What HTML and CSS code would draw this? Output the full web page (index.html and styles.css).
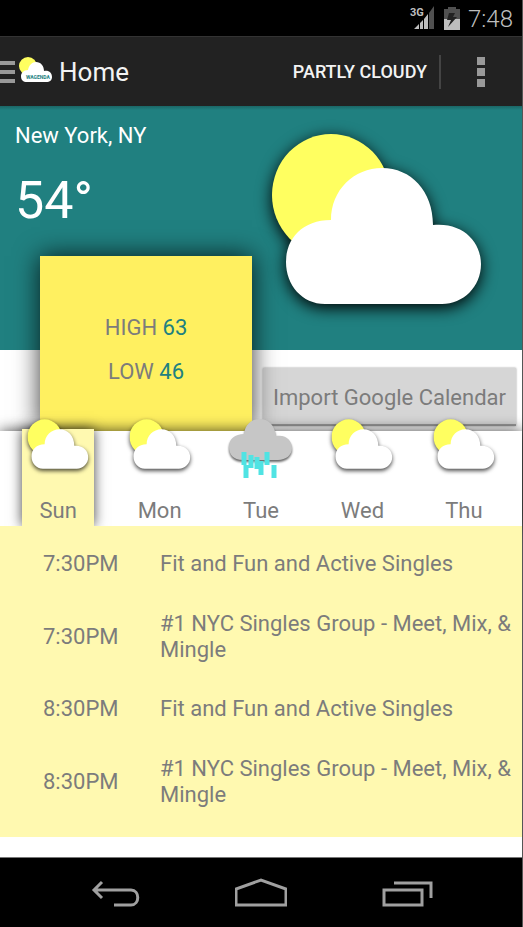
FILE: index.html
```html
<!DOCTYPE html>
<html lang="en">
<head>
<meta charset="utf-8">
<meta name="viewport" content="width=device-width, initial-scale=1">
<title>Wagenda</title>
<link rel="stylesheet" href="styles.css">
</head>
<body>
<svg class="defs" aria-hidden="true">
  <symbol id="sun-cloud" viewBox="0 0 210 172">
    <ellipse class="sun" cx="59" cy="62" rx="59" ry="61"/>
    <path class="cloud" d="M53 171C30 171 14 152 14 129C14 105 31 87 59 87C59 57 82 35 110 35C139 35 161 58 161 92C190 89 209 108 209 131C209 154 191 171 170 171Z"/>
  </symbol>
</svg>
<div class="screen">
  <header class="status">
    <svg class="signal" viewBox="0 0 26 24" aria-hidden="true">
      <text x="0" y="10">3G</text>
      <path class="lit" d="M4 23L9 18V23ZM10 17L13 14V23H10ZM14 13L18 8V23H14Z"/>
      <path class="dim" d="M19 7L24 0V23H19Z"/>
    </svg>
    <svg class="battery" viewBox="0 0 16 23" aria-hidden="true">
      <path class="dim" d="M4 0H12V2H16V12H0V2H4Z"/>
      <path class="lit" d="M0 12H16V23H0Z"/>
      <path class="bolt" d="M5 6H11L9 10H13L4 20L7 13H3Z"/>
    </svg>
    <span>7:48</span>
  </header>
  <nav class="bar">
    <button class="menu" aria-label="Open menu"><svg viewBox="0 0 15 22"><path d="M0 0H15V4H0ZM0 9H15V13H0ZM0 18H15V22H0Z"/></svg></button>
    <svg class="logo" viewBox="0 0 34 26" aria-hidden="true">
      <ellipse class="sun" cx="9" cy="9" rx="9" ry="9"/>
      <path class="cloud" d="M8 25C4 25 2 23 2 19C2 16 5 13 9 13C10 8 13 5 17 5C22 5 25 9 25 14C30 13 33 16 33 20C33 23 31 25 27 25Z"/>
      <text x="7" y="22">WAGENDA</text>
    </svg>
    <h1>Home</h1>
    <button class="condition">PARTLY CLOUDY</button>
    <button class="more" aria-label="More options"><svg viewBox="0 0 8 30"><path d="M0 0H8V8H0ZM0 11H8V19H0ZM0 22H8V30H0Z"/></svg></button>
  </nav>
  <main>
    <section class="now">
      <div>
        <p class="city">New York, NY</p>
        <p class="temp">54°</p>
      </div>
      <svg class="hero" viewBox="0 0 210 172" aria-hidden="true"><use href="#sun-cloud"/></svg>
    </section>
    <section class="under">
      <div class="range">
        <p>HIGH <b>63</b></p>
        <p>LOW <b>46</b></p>
      </div>
      <button class="import">Import Google Calendar</button>
    </section>
    <section class="days">
      <button class="day chosen"><svg viewBox="0 0 210 172"><use href="#sun-cloud"/></svg>Sun</button>
      <button class="day"><svg viewBox="0 0 210 172"><use href="#sun-cloud"/></svg>Mon</button>
      <button class="day"><svg class="rain" viewBox="0 0 66 60">
        <path class="gray" d="M15 41C5 41 1 35 1 28C1 20 7 15 16 15C17 6 23 0 32 0C41 0 47 7 48 17C58 15 64 22 64 29C64 36 58 41 50 41Z"/>
        <path class="drops" d="M16 33V46M18 46V59M23 36V49M29 38V50M33 42V56M39 33V46M46 46V59"/>
      </svg>Tue</button>
      <button class="day"><svg viewBox="0 0 210 172"><use href="#sun-cloud"/></svg>Wed</button>
      <button class="day"><svg viewBox="0 0 210 172"><use href="#sun-cloud"/></svg>Thu</button>
    </section>
    <ul class="events">
      <li><time>7:30PM</time><span>Fit and Fun and Active Singles</span></li>
      <li><time>7:30PM</time><span>#1 NYC Singles Group - Meet, Mix, &amp; Mingle</span></li>
      <li><time>8:30PM</time><span>Fit and Fun and Active Singles</span></li>
      <li><time>8:30PM</time><span>#1 NYC Singles Group - Meet, Mix, &amp; Mingle</span></li>
    </ul>
  </main>
  <footer class="keys">
    <button aria-label="Back"><svg viewBox="0 0 52 30"><path d="M5 12H42C51 12 51 27 42 27H25M13 4L5 12L13 20"/></svg></button>
    <button aria-label="Home"><svg viewBox="0 0 52 30"><path d="M1 27V11L26 2L51 11V27Z"/></svg></button>
    <button aria-label="Recent apps"><svg viewBox="0 0 52 30"><path d="M3 12H41V27H3ZM13 5H50V20"/></svg></button>
  </footer>
</div>
</body>
</html>
```
FILE: styles.css
```css
* { box-sizing: border-box; }
body {
  margin: 0;
  background: #555;
  color: #7c7c7c;
  font: 22px/26px Roboto, sans-serif;
}
h1, p, ul { margin: 0; padding: 0; font-weight: 400; }
button { border: 0; padding: 0; background: none; color: inherit; font: inherit; }
svg { display: block; }
.defs { position: absolute; width: 0; height: 0; }
.sun { fill: #ffff60; }
.cloud { fill: #fff; }
.lit { fill: #bebebe; }
.dim { fill: #505050; }
.screen {
  display: flex;
  flex-direction: column;
  min-height: 100vh;
  margin-right: 1px;
  background: #fff;
}
.status {
  display: flex;
  justify-content: flex-end;
  align-items: center;
  gap: 8px;
  height: 36px;
  padding-right: 9px;
  background: #000;
  color: #bebebe;
  font-size: 24px;
  font-weight: 300;
}
.status span { padding-top: 2px; }
.signal { width: 26px; height: 24px; overflow: visible; }
.signal text { fill: #bebebe; font: 700 11px Roboto, sans-serif; }
.battery { width: 16px; height: 23px; }
.bolt { fill: #222; }
.bar {
  display: flex;
  align-items: center;
  height: 70px;
  background: #222;
  border-top: 1px solid #333;
  color: #f3f3f3;
}
.menu svg { width: 15px; height: 22px; fill: #999; }
.logo { width: 34px; height: 26px; margin: 0 6px 4px 4px; }
.logo text { fill: #208080; font: 700 5px Roboto, sans-serif; }
h1 { flex: 1; font-size: 26px; }
.condition {
  height: 34px;
  padding-right: 12px;
  border-right: 2px solid #444;
  font-size: 18px;
  font-weight: 500;
}
.more { padding: 0 37px 0 36px; }
.more svg { width: 8px; height: 30px; fill: #999; }
.now {
  display: flex;
  justify-content: space-between;
  height: 244px;
  padding: 17px 40px 0 15px;
  background: linear-gradient(#1b6666, #208080 4px);
  color: #fff;
}
.temp { margin-top: 22px; font-size: 52px; line-height: 60px; }
.hero {
  width: 210px;
  height: 172px;
  margin-top: 10px;
  overflow: visible;
  filter: drop-shadow(0 4px 8px #000);
}
.under {
  display: flex;
  align-items: flex-end;
  gap: 11px;
  height: 81px;
  padding: 0 6px 0 40px;
}
.range {
  position: relative;
  display: flex;
  flex-direction: column;
  justify-content: center;
  gap: 18px;
  width: 212px;
  height: 175px;
  padding-top: 12px;
  background: #fff060;
  box-shadow: 0 0 24px #000c;
  text-align: center;
}
b { color: #208080; font-weight: 400; }
.import {
  flex: 1;
  height: 58px;
  margin-bottom: 5px;
  padding-top: 3px;
  background: #d6d6d6;
  border-bottom: 2px solid #999;
  box-shadow: 0 0 2px #0006;
  white-space: nowrap;
}
.days {
  position: relative;
  display: flex;
  gap: 29px;
  height: 95px;
  padding: 0 22px;
  background: #fff;
  box-shadow: 0 0 14px #000b;
}
.day {
  display: flex;
  flex: 1;
  flex-direction: column;
  align-items: center;
  justify-content: space-between;
  margin-top: -2px;
  padding-bottom: 2px;
}
.day svg {
  width: 62px;
  height: 50px;
  margin-top: -10px;
  overflow: visible;
  filter: drop-shadow(0 2px 2px #000b);
}
.day .rain { width: 66px; height: 60px; filter: none; }
.gray { fill: #c6c6c6; filter: drop-shadow(0 2px 1px #0009); }
.drops { stroke: #50e3e3; stroke-width: 5; }
.chosen { background: #fff9b0; box-shadow: 0 0 12px #000b; }
.events {
  position: relative;
  padding: 25px 8px 29px 43px;
  background: #fff9b0;
  list-style: none;
}
.events li {
  display: grid;
  grid-template-columns: 117px 1fr;
  align-items: center;
}
.events li + li { margin-top: 33px; }
.events li:nth-child(even) { padding-top: 1px; }
.keys {
  display: flex;
  justify-content: center;
  align-items: center;
  gap: 94px;
  height: 70px;
  margin-top: auto;
  background: #000;
  border-top: 1px solid #777;
}
.keys svg { width: 52px; height: 30px; fill: none; stroke: #a0a0a0; stroke-width: 3; }
```
